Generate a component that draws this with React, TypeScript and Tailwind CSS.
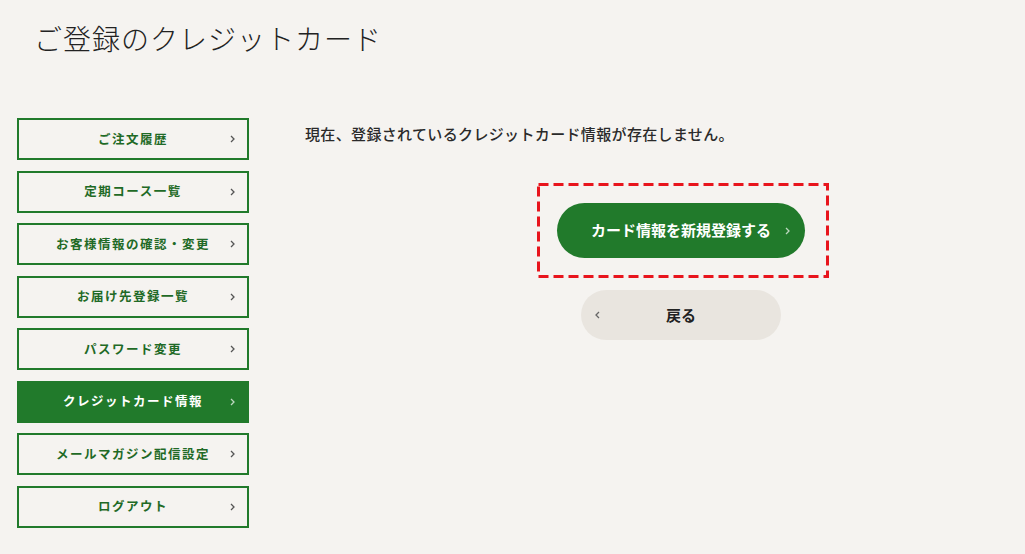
const menu = [
  "ご注文履歴",
  "定期コース一覧",
  "お客様情報の確認・変更",
  "お届け先登録一覧",
  "パスワード変更",
  "クレジットカード情報",
  "メールマガジン配信設定",
  "ログアウト",
];

const jp = "font-['Noto_Sans_CJK_JP','Noto_Sans',sans-serif]";

export default function App() {
  return (
    <div className={`min-h-screen bg-[#f5f3f0] text-[#333] ${jp}`}>
      <h1 className="pl-[34px] pt-[18px] text-[28px] leading-[40px] font-light tracking-[1px] text-[#222]">
        ご登録のクレジットカード
      </h1>

      <div className="flex pt-[60px] pl-[17px]">
        {/* Sidebar */}
        <nav className="flex w-[232px] flex-col gap-[10.5px]">
          {menu.map((label) => (
            <MenuItem key={label} label={label} active={label === "クレジットカード情報"} />
          ))}
        </nav>

        {/* Main */}
        <div className="ml-[56px] flex flex-col">
          <p className="pt-[4px] text-[15px] leading-[24px] font-medium tracking-[0.35px] text-[#2a2a2a]">
            現在、登録されているクレジットカード情報が存在しません。
          </p>

          <div className="ml-[232px] mt-[37px] flex w-[292px] flex-col">
            <div className="relative pl-[20px] pr-[24px] py-[20px]">
              <svg className="absolute inset-0 h-full w-full" fill="none">
                <rect
                  x="1.5"
                  y="1.5"
                  width="289"
                  height="92"
                  stroke="#e8141c"
                  strokeWidth={3}
                  strokeDasharray="10 5"
                />
              </svg>
              <button className="relative flex h-[55px] w-[248px] items-center justify-center rounded-full bg-[#217a2b] text-[15px] font-bold text-white">
                カード情報を新規登録する
                <Chevron className="absolute right-[15px] text-white/70" />
              </button>
            </div>
            <button className="relative ml-[44px] mt-[12px] flex h-[50px] w-[200px] items-center justify-center rounded-full bg-[#e9e5df] text-[15px] font-bold text-[#222]">
              戻る
              <Chevron left className="absolute left-[14px] text-[#666]" />
            </button>
          </div>
        </div>
      </div>
    </div>
  );
}

function MenuItem({ label, active }: { label: string; active?: boolean }) {
  return (
    <a
      href="#"
      className={`relative flex h-[42px] items-center justify-center border-2 border-[#217a2b] text-[12.5px] font-bold tracking-[1.5px] ${
        active ? "bg-[#217a2b] text-white" : "bg-transparent text-[#1f6a26]"
      }`}
    >
      {label}
      <Chevron className={`absolute right-[12px] ${active ? "text-white/70" : "text-[#555]"}`} />
    </a>
  );
}

function Chevron({ className = "", left }: { className?: string; left?: boolean }) {
  return (
    <svg width="5" height="8" viewBox="0 0 5 8" className={className} fill="none" stroke="currentColor" strokeWidth={1.3}>
      <path d={left ? "M4 1 L1 4 L4 7" : "M1 1 L4 4 L1 7"} />
    </svg>
  );
}
